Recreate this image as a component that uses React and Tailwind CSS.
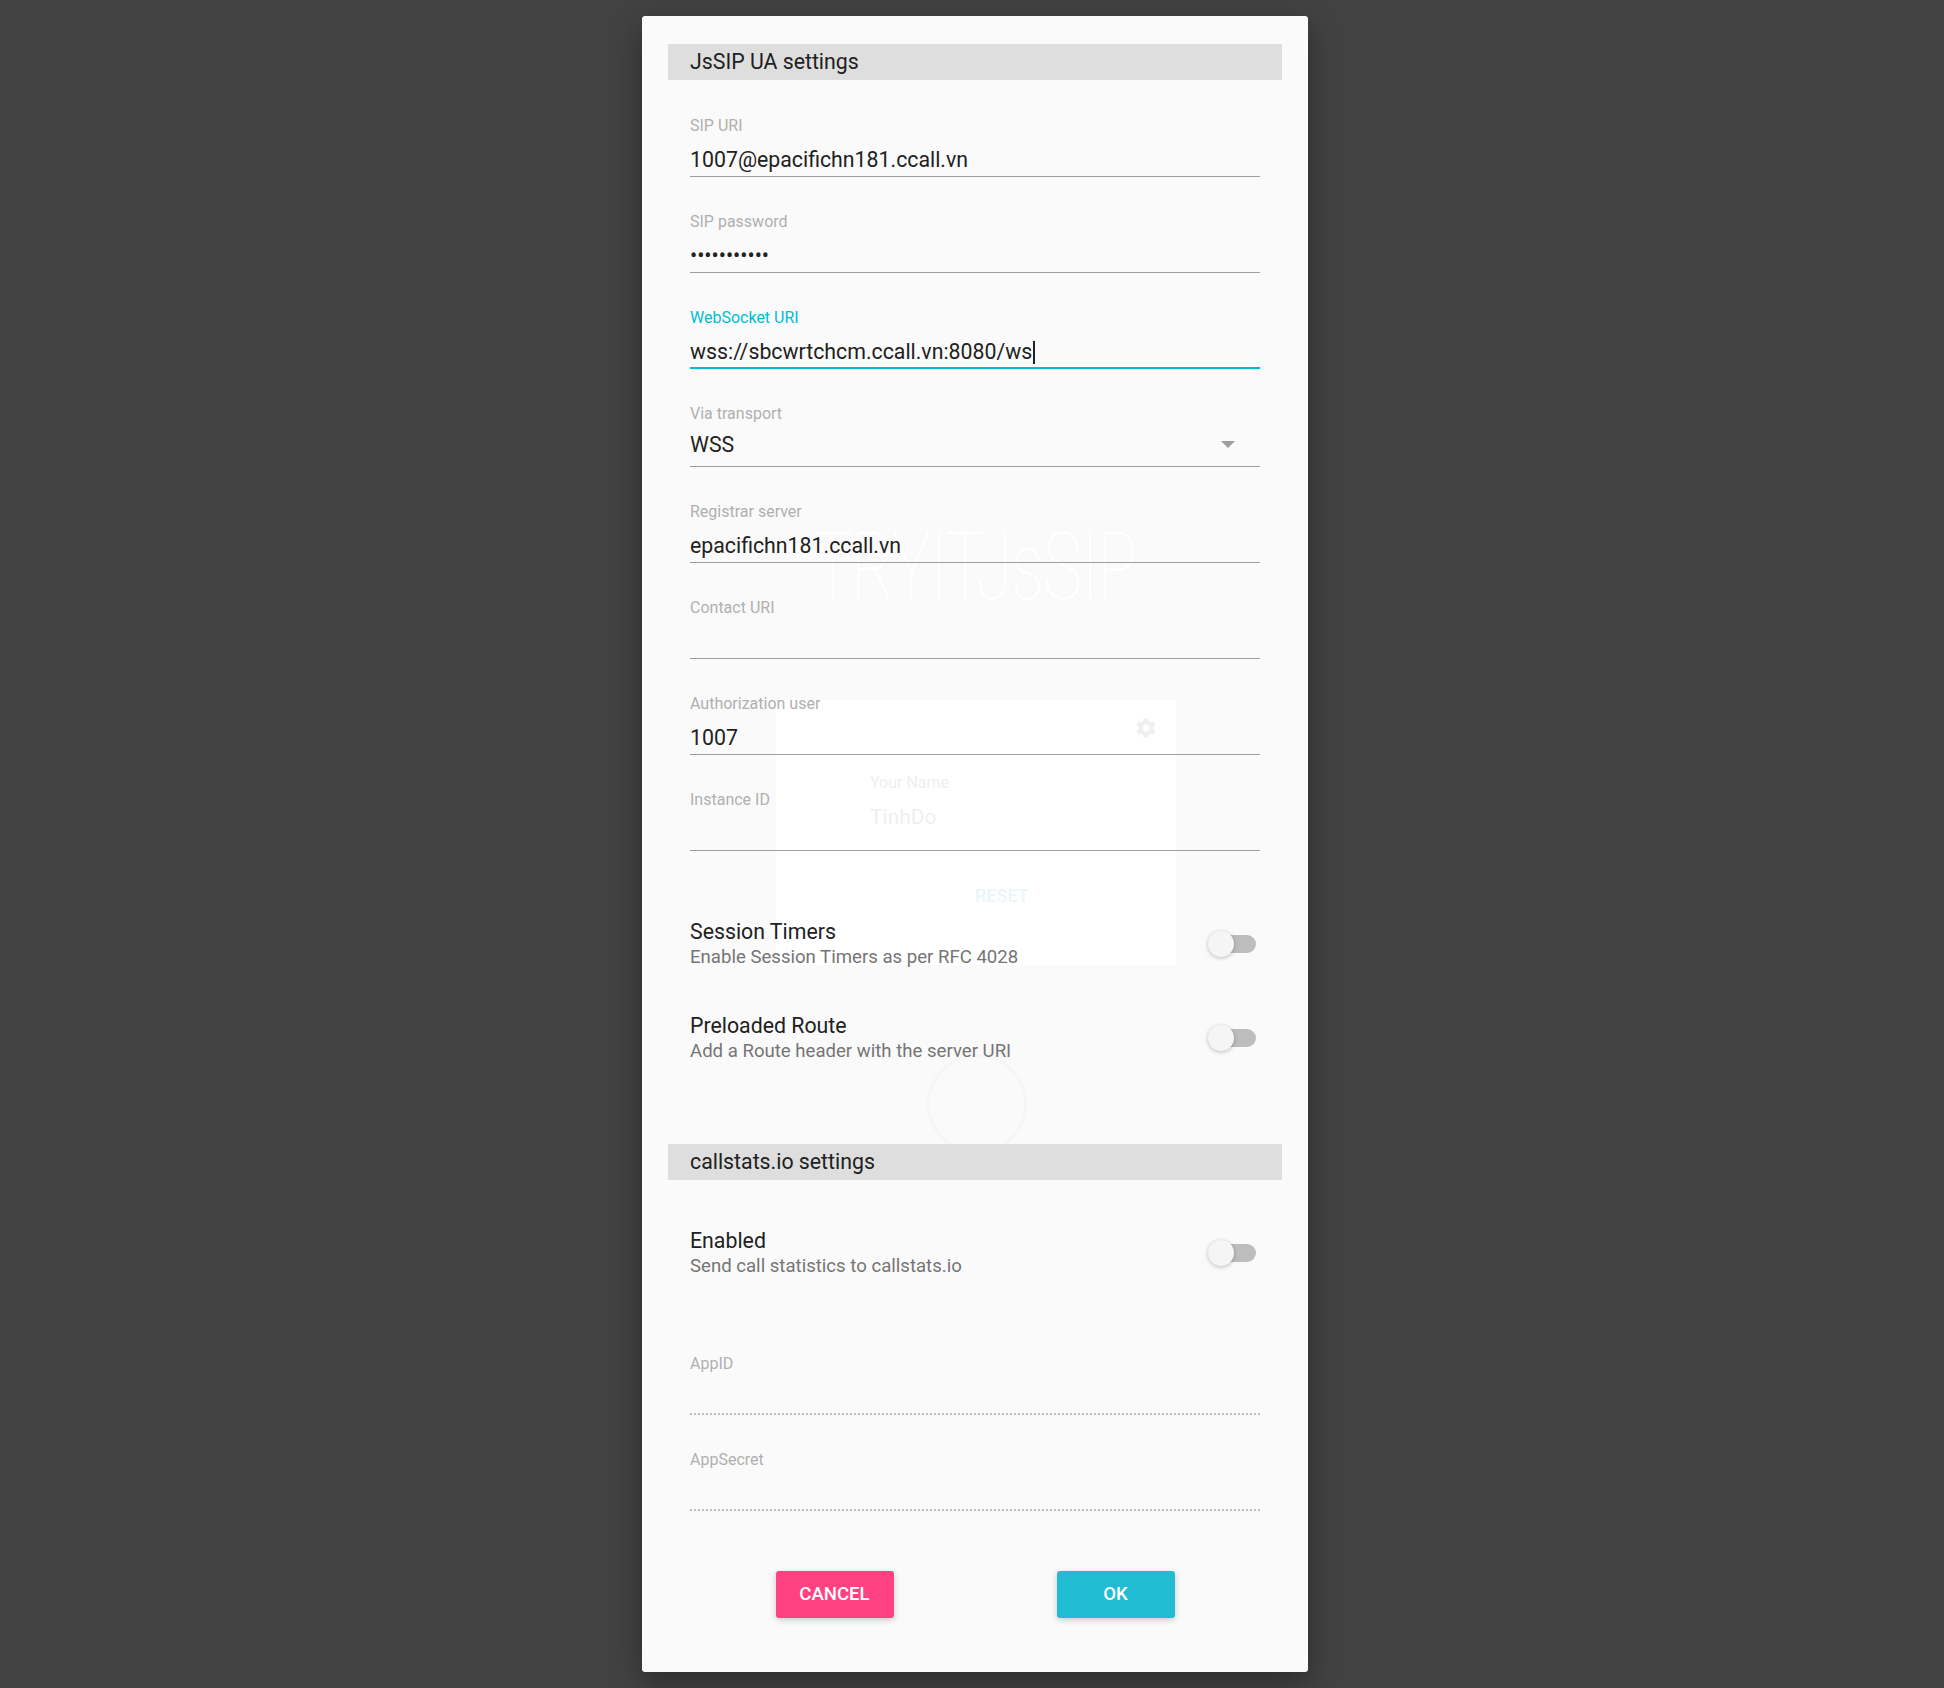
import React from "react";

const font = { fontFamily: "Roboto, 'Noto Sans', sans-serif" };

function Field({ label, value, focused, cursor, disabled, select }) {
  return (
    <div className={`flex flex-col ${select ? "h-[98px]" : "h-[96px]"}`}>
      <div className={`pt-[36px] text-[16px] leading-[18px] ${focused ? "text-[#00bcd4]" : "text-[#b0b0b0]"}`}>
        {label}
      </div>
      <div className={`flex items-center h-[24px] text-[21.3px] leading-[24px] text-[#212121] ${select ? "mt-[10px]" : "mt-[13px]"}`}>
        <span>{value}</span>
        {cursor && <span className="ml-[1px] inline-block w-[1.5px] h-[23px] bg-[#212121]" />}
        {select && (
          <span className="ml-auto mr-[25px] mt-[-2px]">
            <svg width="14" height="7" viewBox="0 0 14 7"><path d="M0 0 L14 0 L7 7 Z" fill="#9e9e9e" /></svg>
          </span>
        )}
      </div>
      <div className="flex-1" />
      {focused ? (
        <div className="h-[2px] bg-[#00bcd4]" />
      ) : disabled ? (
        <div className="border-b-2 border-dotted border-[#bdbdbd]" />
      ) : (
        <div className="h-[1.5px] bg-[#9e9e9e]" />
      )}
    </div>
  );
}

function Toggle() {
  return (
    <div className="relative w-[50px] h-[26px] flex items-center">
      <div className="absolute left-[6px] right-[2px] h-[18px] rounded-full bg-[#bdbdbd]" />
      <div className="absolute left-0 w-[26px] h-[26px] rounded-full bg-[#f5f5f5] shadow-[0_1px_4px_rgba(0,0,0,0.25)]" />
    </div>
  );
}

function ToggleItem({ title, sub }) {
  return (
    <div className="h-[94px] flex items-center">
      <div className="flex flex-col">
        <div className="text-[21.3px] leading-[24px] text-[#212121]">{title}</div>
        <div className="mt-[2px] text-[18.6px] leading-[22px] text-[#757575]">{sub}</div>
      </div>
      <div className="ml-auto mr-[2px]">
        <Toggle />
      </div>
    </div>
  );
}

function Header({ children }) {
  return (
    <div className="mx-[26px] h-[36px] bg-[#dedede] pl-[22px] flex items-center text-[21.3px] text-[#212121]">
      {children}
    </div>
  );
}

function Backdrop() {
  return (
    <div className="absolute inset-0 pointer-events-none overflow-hidden">
      <div className="absolute left-[171px] top-[506px] origin-left scale-x-[0.695] text-[94px] leading-[90px] font-thin text-white tracking-[-1px]">
        TRYITJsSIP
      </div>
      <div className="absolute left-[134px] top-[684px] w-[400px] h-[265px] bg-white rounded-[3px]">
        <svg className="absolute left-[358px] top-[16px]" width="24" height="24" viewBox="0 0 24 24">
          <path
            fill="#efefef"
            d="M19.14 12.94c.04-.3.06-.61.06-.94 0-.32-.02-.64-.07-.94l2.03-1.58a.49.49 0 0 0 .12-.61l-1.92-3.32a.488.488 0 0 0-.59-.22l-2.39.96c-.5-.38-1.03-.7-1.62-.94l-.36-2.540a.484.484 0 0 0-.48-.41h-3.84c-.24 0-.43.17-.47.41l-.36 2.54c-.59.24-1.13.57-1.62.94l-2.39-.96c-.22-.08-.47 0-.59.22L2.74 8.87c-.12.21-.08.47.12.61l2.03 1.58c-.05.3-.09.63-.09.94s.02.64.07.94l-2.03 1.58a.49.49 0 0 0-.12.61l1.92 3.32c.12.22.37.29.59.22l2.39-.96c.5.38 1.03.7 1.62.94l.36 2.54c.05.24.24.41.48.41h3.84c.24 0 .44-.17.47-.41l.36-2.54c.59-.24 1.13-.56 1.62-.94l2.39.96c.22.08.47 0 .59-.22l1.92-3.32c.12-.22.07-.47-.12-.61l-2.01-1.58zM12 15.6c-1.98 0-3.6-1.62-3.6-3.6s1.62-3.6 3.6-3.6 3.6 1.62 3.6 3.6-1.62 3.6-3.6 3.6z"
          />
        </svg>
        <div className="absolute left-[94px] top-[71px] text-[16px] text-[#efefef]">Your Name</div>
        <div className="absolute left-[94px] top-[102px] text-[21px] text-[#efefef]">TinhDo</div>
        <div className="absolute left-[199px] top-[182px] text-[18px] font-medium text-[#eaf6f7]">RESET</div>
      </div>
      <div className="absolute left-[285px] top-[1038px] w-[100px] h-[100px] rounded-full border-[3px] border-[#f6f6f6]" />
    </div>
  );
}

export default function App() {
  return (
    <div className="min-h-screen w-full bg-[#424242] pt-[16px] pb-[16px]" style={font}>
      <div className="relative w-[666px] h-[1656px] bg-[#fafafa] rounded-[3px] shadow-[0_10px_30px_rgba(0,0,0,0.35)] ml-[642px]">
        <Backdrop />
        <div className="relative pt-[28px]">
          <Header>JsSIP UA settings</Header>
          <div className="px-[48px] pt-[1px]">
            <Field label="SIP URI" value="1007@epacifichn181.ccall.vn" />
            <Field label="SIP password" value="•••••••••••" />
            <Field label="WebSocket URI" value="wss://sbcwrtchcm.ccall.vn:8080/ws" focused cursor />
            <Field label="Via transport" value="WSS" select />
            <Field label="Registrar server" value="epacifichn181.ccall.vn" />
            <Field label="Contact URI" value="" />
            <Field label="Authorization user" value="1007" />
            <Field label="Instance ID" value="" />
            <div className="h-[46px]" />
            <ToggleItem title="Session Timers" sub="Enable Session Timers as per RFC 4028" />
            <ToggleItem title="Preloaded Route" sub="Add a Route header with the server URI" />
          </div>
          <div className="h-[59px]" />
          <Header>callstats.io settings</Header>
          <div className="px-[48px]">
            <div className="h-[26px]" />
            <ToggleItem title="Enabled" sub="Send call statistics to callstats.io" />
            <div className="h-[19px]" />
            <Field label="AppID" value="" disabled />
            <Field label="AppSecret" value="" disabled />
            <div className="h-[60px]" />
            <div className="grid grid-cols-2 px-[4px]">
              <div className="flex justify-center">
                <button className="w-[118px] h-[47px] rounded-[3px] bg-[#ff4081] text-white text-[18.6px] font-medium uppercase shadow-[0_2px_6px_rgba(0,0,0,0.2)]">
                  Cancel
                </button>
              </div>
              <div className="flex justify-center">
                <button className="w-[118px] h-[47px] rounded-[3px] bg-[#21bcd4] text-white text-[18.6px] font-medium uppercase shadow-[0_2px_6px_rgba(0,0,0,0.2)]">
                  OK
                </button>
              </div>
            </div>
          </div>
        </div>
      </div>
    </div>
  );
}
